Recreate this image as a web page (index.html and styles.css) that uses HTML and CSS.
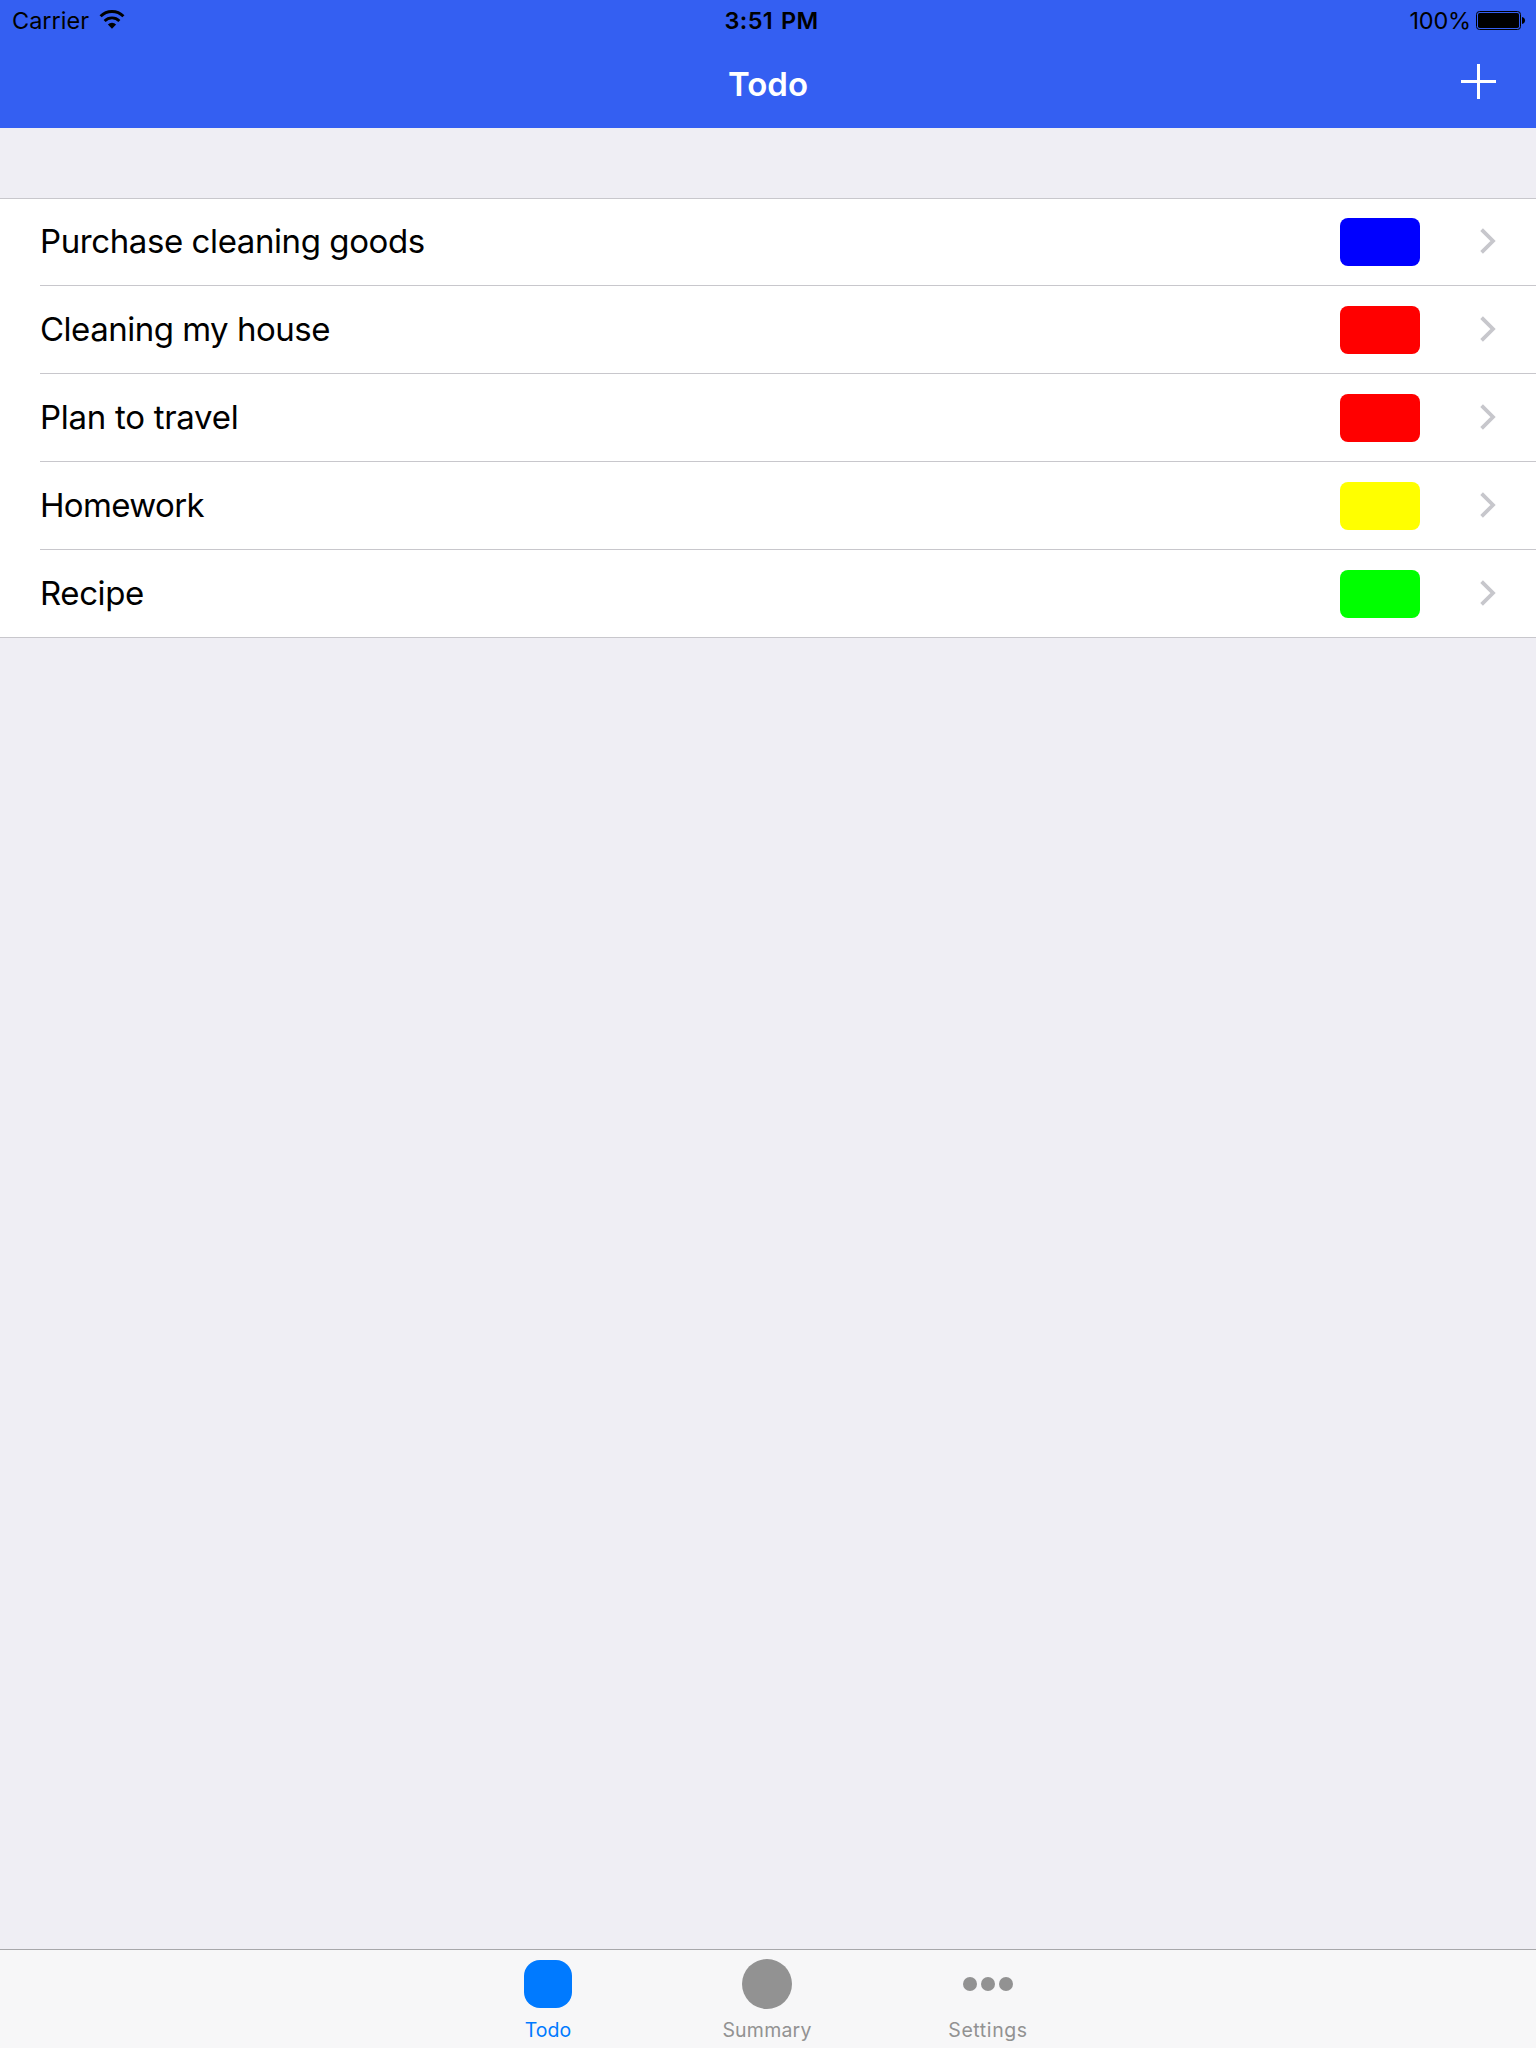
FILE: index.html
```
<!DOCTYPE html>
<html lang="en">
<head>
<meta charset="utf-8">
<title>Todo</title>
<link rel="stylesheet" href="styles.css">
</head>
<body>
<div class="app">
  <header class="header">
    <div class="status">
      <div class="status-left">
        <span class="carrier">Carrier</span>
        <svg class="wifi" width="26" height="20" viewBox="0 0 26 20">
          <path d="M1.6 6.3a16.2 16.2 0 0 1 22.8 0" fill="none" stroke="#000" stroke-width="3"/>
          <path d="M5.6 10.9a10.5 10.5 0 0 1 14.8 0" fill="none" stroke="#000" stroke-width="2.8"/>
          <path d="M8.9 14.4a5.8 5.8 0 0 1 8.2 0L13 18.7z"/>
        </svg>
      </div>
      <span class="time">3:51 PM</span>
      <div class="status-right">
        <span class="percent">100%</span>
        <svg class="battery" width="50" height="20" viewBox="0 0 50 20">
          <rect x=".5" y=".5" width="44" height="18" rx="3" fill="none" stroke="#000"/>
          <rect x="2" y="2" width="41" height="15" rx="1.8"/>
          <path d="M46 6c4 .5 4 6.500 0 7z"/>
        </svg>
      </div>
    </div>
    <div class="navbar">
      <h1 class="title">Todo</h1>
      <svg class="plus" width="35" height="35" viewBox="0 0 35 35"><path d="M16 0h3v16h16v3H19v16h-3V19H0v-3h16z" fill="#fff"/></svg>
    </div>
  </header>
  <main class="content">
    <ul class="list">
      <li class="row"><span class="name">Purchase cleaning goods</span><span class="swatch blue"></span><svg class="chevron" width="16" height="26" viewBox="0 0 16 26"><path d="M1.600 1.600L13 13L1.600 24.400"/></svg></li>
      <li class="row"><span class="name snug">Cleaning my house</span><span class="swatch red"></span><svg class="chevron" width="16" height="26" viewBox="0 0 16 26"><path d="M1.600 1.600L13 13L1.600 24.400"/></svg></li>
      <li class="row"><span class="name loose">Plan to travel</span><span class="swatch red"></span><svg class="chevron" width="16" height="26" viewBox="0 0 16 26"><path d="M1.600 1.600L13 13L1.600 24.400"/></svg></li>
      <li class="row"><span class="name tight">Homework</span><span class="swatch yellow"></span><svg class="chevron" width="16" height="26" viewBox="0 0 16 26"><path d="M1.600 1.600L13 13L1.600 24.400"/></svg></li>
      <li class="row"><span class="name">Recipe</span><span class="swatch green"></span><svg class="chevron" width="16" height="26" viewBox="0 0 16 26"><path d="M1.600 1.600L13 13L1.600 24.400"/></svg></li>
    </ul>
  </main>
  <nav class="tabs">
    <a class="tab active"><svg width="50" height="50" viewBox="0 0 50 50"><rect x="1" y="1" width="48" height="48" rx="16"/></svg><span>Todo</span></a>
    <a class="tab"><svg width="50" height="50" viewBox="0 0 50 50"><circle cx="24" cy="25" r="25"/></svg><span class="label-summary">Summary</span></a>
    <a class="tab"><svg width="50" height="50" viewBox="0 0 50 50"><circle cx="7" cy="25" r="7"/><circle cx="25" cy="25" r="7"/><circle cx="43" cy="25" r="7"/></svg><span class="label-settings">Settings</span></a>
  </nav>
</div>
</body>
</html>
```
FILE: styles.css
```
* { box-sizing: border-box; }
body { margin: 0; font-family: Inter, "Liberation Sans", sans-serif; color: #000; }
.app { width: 1536px; height: 2048px; display: flex; flex-direction: column; background: #efeef4; }
.header { height: 128px; background: #345ff2; }
.status { height: 40px; display: grid; grid-template-columns: 1fr auto 1fr; font-size: 23.5px; font-weight: 380; line-height: 42px; }
.status-left, .status-right { display: flex; align-items: flex-start; }
.status-left { padding-left: 12px; }
.status-right { justify-content: flex-end; padding-right: 10px; }
.wifi { margin: 10px 0 0 10px; }
.battery { margin: 11px 0 0 5px; }
.percent { letter-spacing: -0.2px; }
.time { font-weight: 560; letter-spacing: 0.4px; word-spacing: 1.5px; padding-left: 7px; }
.navbar { height: 88px; display: grid; grid-template-columns: 1fr auto 1fr; }
.title { grid-column: 2; margin: 0; color: #fff; font-size: 33px; font-weight: 560; line-height: 88px; }
.plus { justify-self: end; margin: 24px 40px 0 0; }
.content { flex: 1; padding-top: 70px; }
.list { margin: 0; padding: 0; list-style: none; background: #fff; border-bottom: 1px solid #c8c7cc; box-shadow: inset 0 1px #c8c7cc; }
.row { height: 88px; margin-left: 40px; padding-right: 40px; display: flex; align-items: center; border-bottom: 1px solid #c8c7cc; }
.row:last-child { height: 87px; border-bottom: 0; }
.name { flex: 1; font-size: 33px; font-weight: 380; line-height: 40px; letter-spacing: -0.41px; padding-bottom: 2px; }
.snug { letter-spacing: -0.5px; }
.loose { letter-spacing: -0.28px; }
.tight { letter-spacing: -0.65px; }
.swatch { width: 80px; height: 48px; border-radius: 8px; margin-right: 60px; }
.blue { background: #00f; }
.red { background: #f00; }
.yellow { background: #ff0; }
.green { background: #0f0; }
.chevron { margin-bottom: 2px; }
.chevron path { fill: none; stroke: #c7c7cc; stroke-width: 3.8; }
.tabs { height: 99px; border-top: 1px solid #a7a7aa; background: #f7f7f8; display: flex; justify-content: center; gap: 68px; }
.tab { width: 152px; display: flex; flex-direction: column; align-items: center; padding-top: 9px; font-size: 19.5px; font-weight: 380; line-height: 24px; color: #929292; }
.tab svg { fill: currentColor; margin-bottom: 9px; overflow: visible; }
.label-summary { letter-spacing: 0.2px; padding-right: 2px; }
.label-settings { letter-spacing: 0.6px; }
.active { color: #007aff; }
```
